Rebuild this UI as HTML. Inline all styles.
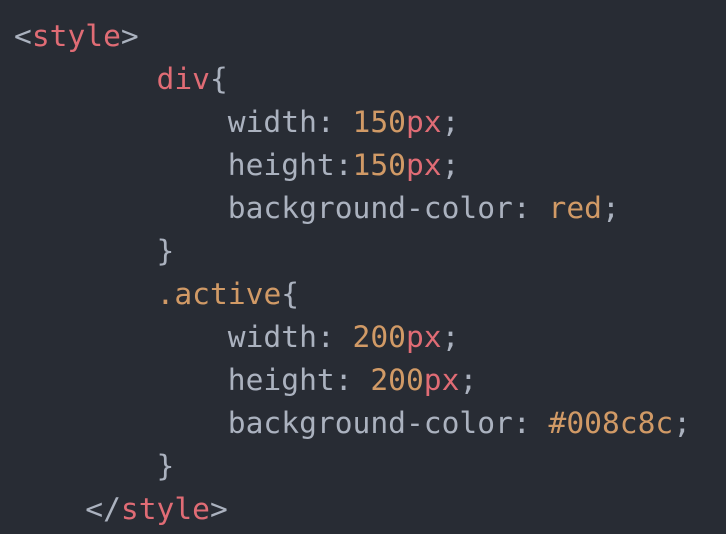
<!DOCTYPE html>
<html><head><meta charset="utf-8"><style>
html,body{margin:0;padding:0;background:#282c34;width:726px;height:534px;overflow:hidden}
pre{margin:0;position:absolute;left:14px;top:15px;font-family:"DejaVu Sans Mono","Liberation Mono",monospace;font-size:29.6px;line-height:43px;color:#abb2bf;white-space:pre}
.r{color:#e06c75}.o{color:#d19a66}
</style></head><body>
<pre>&lt;<span class="r">style</span>&gt;
        <span class="r">div</span>{
            width: <span class="o">150</span><span class="r">px</span>;
            height:<span class="o">150</span><span class="r">px</span>;
            background-color: <span class="o">red</span>;
        }
        <span class="o">.active</span>{
            width: <span class="o">200</span><span class="r">px</span>;
            height: <span class="o">200</span><span class="r">px</span>;
            background-color: <span class="o">#008c8c</span>;
        }
    &lt;/<span class="r">style</span>&gt;</pre>
</body></html>
